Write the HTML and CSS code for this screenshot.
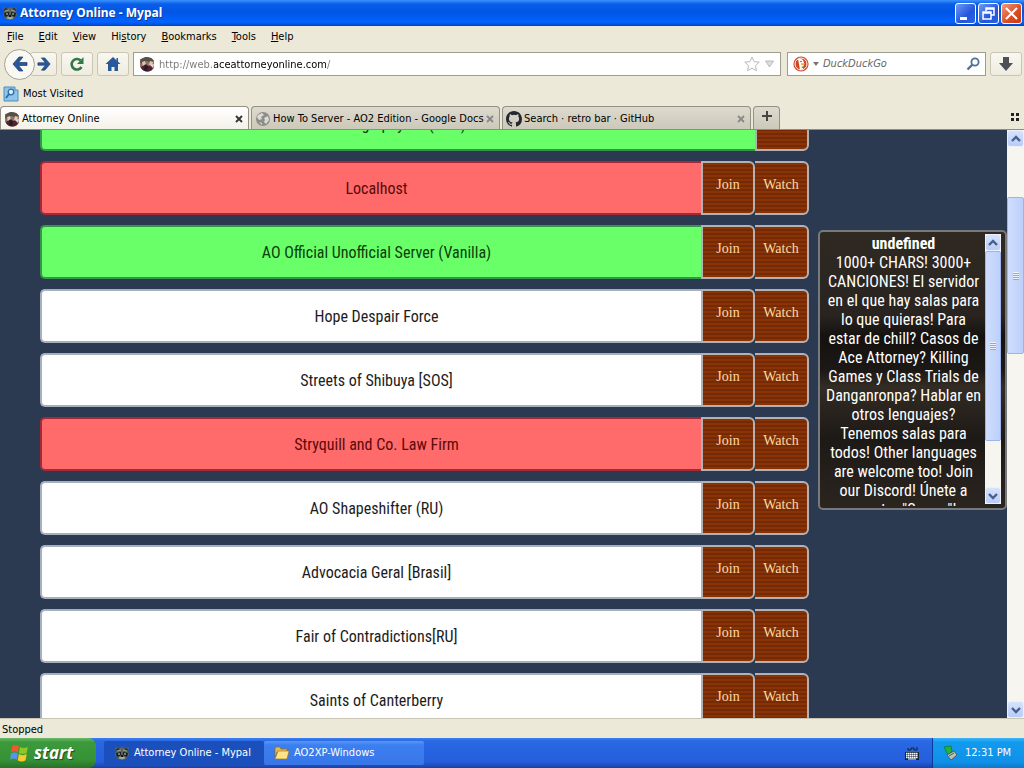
FILE: index.html
```html
<!DOCTYPE html>
<html lang="en">
<head>
<meta charset="utf-8">
<title>Attorney Online - Mypal</title>
<link rel="stylesheet" href="styles.css">
</head>
<body>
<svg class="defs" aria-hidden="true">
  <defs>
    <symbol id="raccoon" viewBox="0 0 16 16">
      <path d="M1 2l4 1 3-1 3 1 4-1-1 4 1 4-3 4-4 1-4-1-3-4 1-4z" fill="#59635b"/>
      <path d="M3 3l3 1-4 2zM13 3l-3 1 4 2z" fill="#252b2b"/>
      <path d="M2 8l5-1v3l-4 2zM14 8l-5-1v3l4 2z" fill="#161b20"/>
      <path d="M3 6l4-1M13 6l-4-1M5 13l2-1h2l2 1-3 1z" stroke="#a9ada3" stroke-width=".8" fill="#a9ada3"/>
      <circle cx="5" cy="9" r=".8" fill="#dfe"/><circle cx="11" cy="9" r=".8" fill="#dfe"/>
      <path d="M7 10h2v2H7z" fill="#111"/>
    </symbol>
    <symbol id="court" viewBox="0 0 16 16">
      <path d="M1 3l5-1h6l3 3v7l-3 3H5l-4-4z" fill="#8a7770"/>
      <path d="M1 6c1-6 11-7 14-1l-4 1-4-1-4 3z" fill="#575046"/>
      <path d="M3 6l3-1 1 4-3 2zM11 5l3 1-1 4-3-1z" fill="#e7c4ab"/>
      <path d="M2 11l5-3 2 2 4-1 1 3c-2 5-9 5-12 0z" fill="#57202e"/>
      <path d="M6 9l3 1-1 5-3-1z" fill="#1c1f2d"/>
      <path d="M11 9l4-1-1 4z" fill="#ddd"/>
    </symbol>
    <symbol id="arrow" viewBox="0 0 16 16">
      <path d="M7 1h4L6.500 6.500H15v3H6.500L11 15H7L1 8z" fill="#28579a" stroke="#1c3d70" stroke-width=".7"/>
    </symbol>
    <symbol id="chev" viewBox="0 0 10 10">
      <path d="M1 7l4-4 4 4" fill="none" stroke="#48608e" stroke-width="2.4"/>
    </symbol>
    <symbol id="cross" viewBox="0 0 8 8">
      <path d="M1 1l6 6M7 1L1 7" fill="none" stroke="currentColor" stroke-width="1.8"/>
    </symbol>
  </defs>
</svg>

<header class="titlebar">
  <svg class="ico"><use href="#raccoon"/></svg>
  <h1 class="title">Attorney Online - Mypal</h1>
  <button class="win" aria-label="Minimize"><svg viewBox="0 0 19 19"><path d="M4 13h7v3H4z" fill="#fff"/></svg></button>
  <button class="win" aria-label="Restore"><svg viewBox="0 0 19 19"><path d="M7 7V4h8v7h-3M7 5h8M4 8h8v7H4zM4 9h8" fill="none" stroke="#fff" stroke-width="1.5"/></svg></button>
  <button class="win win-close" aria-label="Close"><svg viewBox="0 0 19 19"><path d="M4 4l11 11M15 4L4 15" stroke="#fff" stroke-width="2.2"/></svg></button>
</header>

<nav class="menubar">
  <button><u>F</u>ile</button><button><u>E</u>dit</button><button><u>V</u>iew</button><button>Hi<u>s</u>tory</button><button><u>B</u>ookmarks</button><button><u>T</u>ools</button><button><u>H</u>elp</button>
</nav>

<div class="toolbar">
  <div class="backfwd">
    <button class="back" aria-label="Back"><svg class="ico"><use href="#arrow"/></svg></button>
    <button class="tool forward" aria-label="Forward"><svg class="ico-s flip"><use href="#arrow"/></svg></button>
  </div>
  <button class="tool" aria-label="Reload"><svg class="ico" viewBox="0 0 16 16"><path d="M12.5 11A5.3 5.3 0 1 1 11.5 4.300" fill="none" stroke="#32764a" stroke-width="2.6"/><path d="M14.500 1v7H8z" fill="#32764a"/></svg></button>
  <button class="tool" aria-label="Home"><svg class="ico" viewBox="0 0 16 16"><path d="M8 1l7.500 7H13v7h-3.500v-4h-3v4H3V8H.5z" fill="#28579a"/><path d="M11.500 2H13v4h-1.500z" fill="#28579a"/></svg></button>
  <div class="field url">
    <svg class="ico"><use href="#court"/></svg>
    <input class="url-input" type="text" aria-label="Address" value="http://web.aceattorneyonline.com/">
    <svg class="ico" viewBox="0 0 16 16"><path d="M8 1l2.200 4.600 5 .6-3.700 3.500 1 5L8 12.200l-4.500 2.500 1-5L.8 6.200l5-.6z" fill="#fdfdfd" stroke="#b9b9bd"/></svg>
    <svg class="caret" viewBox="0 0 10 8"><path d="M1 1h8L5 7z" fill="#ddd" stroke="#bbb"/></svg>
  </div>
  <div class="field search">
    <svg class="ico" viewBox="0 0 16 16"><circle cx="8" cy="8" r="7.600" fill="#cf4725"/><circle cx="8" cy="8" r="6" fill="none" stroke="#fff"/><path d="M5 3c4-1 6 1 6 5l-1 5-3 1-1-6z" fill="#fff"/><path d="M8 7l4 .5-1 1.500H8z" fill="#f3b52c"/><path d="M8 11l3-1v3z" fill="#58a046"/><circle cx="8" cy="5.500" r=".7" fill="#234"/></svg>
    <svg class="caret-s" viewBox="0 0 6 4"><path d="M0 0h6L3 4z" fill="#777"/></svg>
    <input class="search-input" type="text" aria-label="Search" placeholder="DuckDuckGo">
    <svg class="ico-s" viewBox="0 0 14 14"><circle cx="9" cy="5" r="3.600" fill="none" stroke="#4d7299" stroke-width="1.800"/><path d="M6.500 7.500L1.500 12.500" stroke="#4d7299" stroke-width="2.400"/></svg>
  </div>
  <button class="tool" aria-label="Downloads"><svg class="ico" viewBox="0 0 16 16"><path d="M5 1h6v6h4l-7 8-7-8h4z" fill="#4d5157"/></svg></button>
</div>

<div class="bookmarks">
  <a href="#"><svg class="ico" viewBox="0 0 16 16"><path d="M1 1h11v3h3v11H1z" fill="#8fc4ea" stroke="#4c8ec0"/><circle cx="8" cy="6" r="2.800" fill="#d5ecfb" stroke="#2e6ea5" stroke-width="1.300"/><path d="M6 8l-3 4" stroke="#2e6ea5" stroke-width="1.800"/></svg>Most Visited</a>
</div>

<div class="tabs" role="tablist">
  <div class="tab tab-on" role="tab" aria-selected="true">
    <svg class="ico"><use href="#court"/></svg><span class="tab-name">Attorney Online</span>
    <button class="tab-x" aria-label="Close tab"><svg><use href="#cross"/></svg></button>
  </div>
  <div class="tab" role="tab">
    <svg class="ico" viewBox="0 0 16 16"><circle cx="8" cy="8" r="7" fill="#8d8d89"/><path d="M3 4l4-2 2 2-3 2 1 2-3 1-2-3zM9 7l4-2 1 4-3 4-2-2 1-2zM4 11l3 1v2z" fill="#dcdcd6"/></svg><span class="tab-name">How To Server - AO2 Edition - Google Docs</span>
    <button class="tab-x" aria-label="Close tab"><svg><use href="#cross"/></svg></button>
  </div>
  <div class="tab" role="tab">
    <svg class="ico" viewBox="0 0 16 16"><path fill="#24292f" d="M8 0C3.580 0 0 3.580 0 8c0 3.540 2.290 6.530 5.470 7.590.4.070.55-.17.55-.38v-1.490c-2.010.37-2.530-.49-2.690-.94-.09-.23-.48-.94-.82-1.130-.28-.15-.68-.52-.01-.53.63-.01 1.080.58 1.230.82.72 1.210 1.870.87 2.330.66.070-.52.280-.87.510-1.070-1.780-.2-3.640-.89-3.640-3.950 0-.87.310-1.590.82-2.150-.08-.2-.36-1.020.08-2.120 0 0 .67-.21 2.200.82a7.600 7.600 0 0 1 4 0c1.530-1.040 2.200-.82 2.200-.82.440 1.100.16 1.920.08 2.120.510.56.82 1.270.82 2.150 0 3.070-1.870 3.750-3.650 3.950.290.250.540.73.540 1.480v2.200c0 .21.150.46.550.38A8 8 0 0 0 16 8c0-4.420-3.580-8-8-8z"/></svg><span class="tab-name">Search · retro bar · GitHub</span>
    <button class="tab-x" aria-label="Close tab"><svg><use href="#cross"/></svg></button>
  </div>
  <button class="tab-new" aria-label="New tab"><svg viewBox="0 0 10 10"><path d="M5 0v10M0 5h10" stroke="#444" stroke-width="2"/></svg></button>
  <button class="tab-list" aria-label="List tabs"><svg viewBox="0 0 9 8"><path d="M0 0h3v3H0zM5 0h3v3H5zM0 5h3v3H0zM5 5h3v3H5z" fill="#222"/></svg></button>
</div>

<div class="view">
  <main class="page">
    <ul class="servers">
      <li class="server on"><span class="name">Biography RU (Test)</span><button class="act">Watch</button></li>
      <li class="server off"><span class="name">Localhost</span><button class="act">Join</button><button class="act">Watch</button></li>
      <li class="server on"><span class="name">AO Official Unofficial Server (Vanilla)</span><button class="act">Join</button><button class="act">Watch</button></li>
      <li class="server"><span class="name">Hope Despair Force</span><button class="act">Join</button><button class="act">Watch</button></li>
      <li class="server"><span class="name">Streets of Shibuya [SOS]</span><button class="act">Join</button><button class="act">Watch</button></li>
      <li class="server off"><span class="name">Stryquill and Co. Law Firm</span><button class="act">Join</button><button class="act">Watch</button></li>
      <li class="server"><span class="name">AO Shapeshifter (RU)</span><button class="act">Join</button><button class="act">Watch</button></li>
      <li class="server"><span class="name">Advocacia Geral [Brasil]</span><button class="act">Join</button><button class="act">Watch</button></li>
      <li class="server"><span class="name">Fair of Contradictions[RU]</span><button class="act">Join</button><button class="act">Watch</button></li>
      <li class="server"><span class="name">Saints of Canterberry</span><button class="act">Join</button><button class="act">Watch</button></li>
    </ul>
    <aside class="info">
      <div class="info-text"><b>undefined</b><br>1000+ CHARS! 3000+ CANCIONES! El servidor en el que hay salas para lo que quieras! Para estar de chill? Casos de Ace Attorney? Killing Games y Class Trials de Danganronpa? Hablar en otros lenguajes? Tenemos salas para todos! Other languages are welcome too! Join our Discord! Únete a nuestro "Server"!</div>
      <div class="scroll">
        <button class="sb" aria-label="Scroll up"><svg><use href="#chev"/></svg></button>
        <div class="thumb thumb-info"><i class="grip"></i></div>
        <button class="sb sb-down" aria-label="Scroll down"><svg><use href="#chev"/></svg></button>
      </div>
    </aside>
  </main>
  <div class="scroll">
    <button class="sb" aria-label="Scroll up"><svg><use href="#chev"/></svg></button>
    <div class="thumb thumb-page"><i class="grip"></i></div>
    <button class="sb sb-down" aria-label="Scroll down"><svg><use href="#chev"/></svg></button>
  </div>
</div>

<div class="status">Stopped</div>

<footer class="taskbar">
  <button class="start"><svg viewBox="0 0 18 18"><path d="M2 3c2-1.500 4-1.500 6 0L7 8.500c-2-1.500-4-1.500-6 0z" fill="#ee5a2a"/><path d="M9 3.500c2 1.300 4 1.300 7 0L15 9c-2 1.300-5 1.300-7 0z" fill="#8ac926"/><path d="M1 9.500c2-1.300 4-1.300 6 0L6 15c-2-1.300-4-1.300-6 0z" fill="#5b93f5"/><path d="M8 10c2 1.300 5 1.300 7 0l-1 5.500c-2 1.500-5 1.500-7 0z" fill="#fbc928"/></svg>start</button>
  <button class="task task-on"><svg class="ico"><use href="#raccoon"/></svg>Attorney Online - Mypal</button>
  <button class="task"><svg class="ico" viewBox="0 0 16 16"><path d="M1 3l1-1h4l1 2h6v3H3L1 13z" fill="#e9b94a" stroke="#8a6a1a" stroke-width=".7"/><path d="M4 6h11l-2 8H1z" fill="#fde38a" stroke="#a47b20" stroke-width=".7"/></svg>AO2XP-Windows</button>
  <svg class="keyboard" viewBox="0 0 14 14"><path d="M3 1v2h3v-2h3v2h3V0" fill="none" stroke="#123"/><path d="M0 5h14v8H0z" fill="#123"/><path d="M1 6.500h12M1 8.500h12M1 10.500h12" stroke="#fff" stroke-width="1.300" stroke-dasharray="1.600 .4"/><path d="M3 12h8" stroke="#fff"/></svg>
  <div class="tray"><svg class="ico" viewBox="0 0 16 16"><path d="M2 2l7-1 1 5-4 4z" fill="#24b336" stroke="#0e6f20" stroke-width=".6"/><path d="M5 10l7-4 3 4-6 5z" fill="#b8c3b9" stroke="#42544c" stroke-width=".8"/><path d="M7 11l5-3" stroke="#465"/></svg><time>12:31 PM</time></div>
</footer>
</body>
</html>
```
FILE: styles.css
```css
* { box-sizing: border-box; }
body {
  margin: 0;
  height: 100vh;
  display: flex;
  flex-direction: column;
  overflow: hidden;
  background: #ece9d8;
  color: #000;
  font: 11px/14px Tahoma, "DejaVu Sans Condensed", sans-serif;
}
button, input { font: inherit; color: inherit; border: 0; margin: 0; padding: 0; background: none; }
.defs { position: absolute; width: 0; height: 0; }
.ico { width: 16px; height: 16px; flex: none; }
.ico-s { width: 14px; height: 14px; flex: none; }
.flip { transform: scaleX(-1); }

.titlebar {
  display: flex;
  align-items: center;
  gap: 2px;
  height: 26px;
  flex: none;
  padding: 0 2px;
  background: linear-gradient(#3a93ff 0, #0a5ee8 4px, #0055e5 12px, #0364ff 22px, #0144c8 26px);
  color: #fff;
}
.title { flex: 1; margin: 0; font: bold 12px/16px "Trebuchet MS", "Noto Sans", sans-serif; text-shadow: 1px 1px #0a3a9c; }
.win { width: 21px; height: 21px; border: 1px solid #fff; border-radius: 3px; background: linear-gradient(135deg, #6e9af5, #2355dc 60%, #2a62e8); }
.win svg { display: block; width: 19px; height: 19px; }
.win-close { background: linear-gradient(135deg, #f09a80, #da4a20 60%, #c83a10); }

.menubar { display: flex; gap: 15px; height: 21px; flex: none; padding: 0 7px; align-items: center; }

.toolbar { display: flex; align-items: center; gap: 4px; height: 34px; flex: none; padding: 0 2px 0 4px; }
.backfwd { display: flex; align-items: center; }
.back { width: 31px; height: 31px; border: 1px solid #a5a294; border-radius: 50%; background: #f9f8f3; display: grid; place-items: center; z-index: 1; }
.tool { width: 32px; height: 24px; border: 1px solid #c9c6b6; border-radius: 3px; background: linear-gradient(#f8f7f1, #efecdf); display: grid; place-items: center; }
.forward { margin-left: -5px; width: 27px; }
.field { display: flex; align-items: center; height: 24px; border: 1px solid #9f9d90; background: #fff; padding: 0 5px; gap: 4px; }
.field input { flex: 1; min-width: 0; outline: 0; }
.url { flex: 1; }
.url-input {
  height: 20px;
  background: linear-gradient(90deg, #777 55px, #000 55px, #000 168px, #777 168px);
  background-clip: text;
  color: transparent;
}
.caret { width: 11px; height: 8px; }
.search { width: 199px; margin-left: 2px; }
.caret-s { width: 6px; height: 4px; }
.search-input::placeholder { color: #666; font-style: italic; opacity: 1; }

.bookmarks { height: 25px; flex: none; padding: 5px 3px; }
.bookmarks a { display: inline-flex; align-items: center; gap: 4px; color: #000; text-decoration: none; }

.tabs { display: flex; gap: 2px; height: 24px; flex: none; border-bottom: 1px solid #8f8c80; }
.tab {
  display: flex;
  align-items: center;
  gap: 2px;
  flex: 0 1 249px;
  min-width: 0;
  padding: 1px 4px 0 3px;
  border: 1px solid #949184;
  border-bottom: 0;
  border-radius: 4px 4px 0 0;
  background: linear-gradient(#dddace, #ccc9bb);
}
.tab-on { background: linear-gradient(#fff, #f3f1e8); }
.tab-name { flex: 1; white-space: nowrap; }
.tab-x { width: 9px; height: 8px; color: #888; display: flex; }
.tab-x svg { width: 8px; height: 8px; }
.tab-on .tab-x { color: #333; }
.tab-new { width: 27px; border: 1px solid #949184; border-bottom: 0; border-radius: 4px 4px 0 0; background: linear-gradient(#dddace, #ccc9bb); }
.tab-new svg { width: 10px; height: 10px; }
.tab-list { margin-left: auto; padding-right: 4px; }
.tab-list svg { width: 9px; height: 8px; }

.view { flex: 1; min-height: 0; display: flex; }
.page { flex: 1; min-width: 0; display: flex; gap: 9px; background: #2b3a50; overflow: hidden; font: 16px/19px "Roboto Condensed", "Liberation Sans Narrow", sans-serif; }
.servers { flex: 1; margin: -33px 0 0 40px; padding: 0; list-style: none; display: flex; flex-direction: column; gap: 10px; }
.server { display: flex; height: 54px; flex: none; }
.name { flex: 1; border: 2px solid #a4b0c0; border-right: 0; border-radius: 5px 0 0 5px; background: #fff; padding-left: 10px; line-height: 52px; text-align: center; color: #1c1c1c; }
.on .name { background: #69ff69; border-color: #35964a; color: #0b3d0b; }
.off .name { background: #ff6b6b; border-color: #a52a38; color: #5a0a0a; }
.act {
  width: 54px;
  padding-bottom: 7px;
  border: 2px solid #b4b0b4;
  border-radius: 0 6px 6px 0;
  background: repeating-linear-gradient(#8a3406 0 2px, #742a06 2px 4px);
  color: #ffd9a0;
  font: 14px/18px "Liberation Serif", serif;
}
.act + .act { border-left: 0; }
.info {
  width: 189px;
  height: 280px;
  margin-top: 100px;
  padding: 2px 4px 2px 2px;
  display: flex;
  flex: none;
  border: 2px solid #777a7d;
  border-radius: 5px;
  background: linear-gradient(#2f2922 0, #292420 30%, #14110f 38%, #1c1815 50%, #332c24 56%, #1d1916 75%, #2b251f 100%);
  color: #fff;
}
.info-text { flex: 1; min-width: 0; padding: 0 3px; overflow: hidden; text-align: center; }
.info .scroll { width: 16px; height: 270px; }

.scroll { display: flex; flex-direction: column; width: 17px; flex: none; background: #f6f5ef; }
.sb { width: 100%; height: 17px; border: 1px solid #eaf0ff; border-radius: 3px; background: linear-gradient(#d6e2fd, #b9ccf8); display: grid; place-items: center; flex: none; }
.sb svg { width: 10px; height: 10px; }
.sb-down { margin-top: auto; }
.sb-down svg { transform: scaleY(-1); }
.thumb { border: 1px solid #9db4e8; border-radius: 2px; background: linear-gradient(90deg, #cfddfe, #bdd0fb); display: grid; place-items: center; }
.thumb-info { height: 190px; }
.thumb-page { height: 157px; margin-top: 50px; }
.grip { width: 6px; height: 8px; background: repeating-linear-gradient(#edf3ff 0 1px, #8ea7de 1px 2px); }

.status { height: 20px; flex: none; padding: 4px 2px; border-top: 1px solid #c8c5b5; }

.taskbar { display: flex; height: 30px; flex: none; background: linear-gradient(#3a80f0 0, #2a68e4 3px, #245edb 24px, #1941a5 30px); color: #fff; }
.start {
  width: 96px;
  display: flex;
  align-items: center;
  gap: 4px;
  padding-left: 10px;
  border-radius: 0 8px 8px 0;
  background: linear-gradient(#6db86a 0, #3c9a3c 4px, #359235 22px, #287028 30px);
  font: italic bold 17px/24px "Open Sans", sans-serif;
  text-shadow: 1px 1px 1px #1b4a1b;
}
.start svg { width: 20px; height: 20px; flex: none; }
.task { width: 160px; height: 24px; margin-top: 3px; padding-left: 10px; display: flex; align-items: center; gap: 4px; border-radius: 2px; background: linear-gradient(#5a97f8, #3c7ff0 4px, #3876e8); }
.task-on { margin-left: 8px; background: #1b50bc; }
.keyboard { width: 14px; height: 14px; margin: 9px 13px 0 auto; }
.tray { width: 92px; display: flex; align-items: center; gap: 7px; padding-left: 9px; border-left: 1px solid #0b3a9c; background: linear-gradient(#3db4f8 0, #129bee 4px, #1090e8 24px, #0f78c8 30px); }
```
